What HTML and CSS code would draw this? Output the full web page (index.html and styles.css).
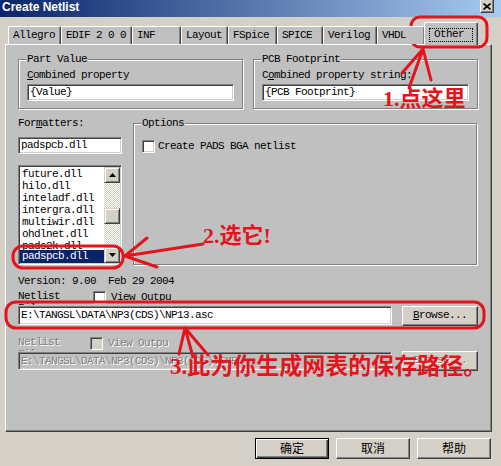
FILE: index.html
```html
<!DOCTYPE html>
<html lang="zh-CN">
<head>
  <meta charset="UTF-8" />
  <title>Create Netlist</title>
  <link rel="stylesheet" href="styles.css">
</head>
<body>
  <div class="window">
    <div class="titlebar">
      <span class="title">Create Netlist</span>
      <span class="close">
        <svg width="8" height="7" viewBox="0 0 8 7"><path d="M0.5 0.5 L7.5 6.5 M7.5 0.5 L0.5 6.5" stroke="#000" stroke-width="1.6"/></svg>
      </span>
    </div>

    <div class="tabs">
      <div class="tab">Allegro</div>
      <div class="tab">EDIF 2 0 0</div>
      <div class="tab">INF</div>
      <div class="tab">Layout</div>
      <div class="tab">FSpice</div>
      <div class="tab">SPICE</div>
      <div class="tab">Verilog</div>
      <div class="tab">VHDL</div>
      <div class="tab active"><span class="focus">Other</span></div>
    </div>

    <div class="panel">
      <div class="top-row">
        <fieldset class="group">
          <legend>Part Value</legend>
          <div class="label"><u>C</u>ombined property</div>
          <div class="field">{Value}</div>
        </fieldset>
        <fieldset class="group">
          <legend>PCB Footprint</legend>
          <div class="label">C<u>o</u>mbined property string:</div>
          <div class="field">{PCB Footprint}</div>
        </fieldset>
      </div>

      <div class="mid-row">
        <div class="formatters">
          <div class="label">For<u>m</u>atters:</div>
          <div class="field small">padspcb.dll</div>
          <div class="listbox">
            <ul class="items">
              <li>future.dll</li>
              <li>hilo.dll</li>
              <li>inteladf.dll</li>
              <li>intergra.dll</li>
              <li>multiwir.dll</li>
              <li>ohdlnet.dll</li>
              <li class="cut">pads2k.dll</li>
              <li class="selected">padspcb.dll</li>
              <li>padsrt.dll</li>
            </ul>
            <div class="scrollbar">
              <div class="sb-btn">
                <svg width="7" height="4" viewBox="0 0 7 4"><path d="M3.5 0 L7 4 L0 4 Z" fill="#000"/></svg>
              </div>
              <div class="sb-track"><div class="sb-thumb"></div></div>
              <div class="sb-btn">
                <svg width="7" height="4" viewBox="0 0 7 4"><path d="M0 0 L7 0 L3.5 4 Z" fill="#000"/></svg>
              </div>
            </div>
          </div>
        </div>
        <fieldset class="group options">
          <legend>Options</legend>
          <div class="check"><span class="box"></span>Create PADS BGA netlist</div>
        </fieldset>
      </div>

      <div class="version">Version: 9.00  Feb 29 2004</div>

      <div class="file-head">
        <div class="label stack">Netlist<br>File:</div>
        <div class="check"><span class="box"></span>View Outpu</div>
      </div>
      <div class="file-row">
        <div class="field path">E:\TANGSL\DATA\NP3(CDS)\NP13.asc</div>
        <div class="button"><u>B</u>rowse...</div>
      </div>

      <div class="file-head disabled">
        <div class="label stack">Netlist<br>File:</div>
        <div class="check"><span class="box"></span>View Outpu</div>
      </div>
      <div class="file-row disabled">
        <div class="field path">E:\TANGSL\DATA\NP3(CDS)\NP3(CDS).GMP</div>
        <div class="button">Browse...</div>
      </div>
    </div>

    <div class="footer">
      <div class="button cjk default">确定</div>
      <div class="button cjk">取消</div>
      <div class="button cjk">帮助</div>
    </div>

    <!-- red notes drawn over the dialog -->
    <div class="marks">
      <svg width="501" height="466" viewBox="0 0 501 466">
        <g fill="none" stroke="#e3141c" stroke-width="3" stroke-linecap="round">
          <rect x="411" y="17" width="76" height="30" rx="9"/>
          <path d="M423 49 L402 73 M423 49 L409 88 M423 49 L431 80"/>
          <rect x="13" y="246" width="110" height="22" rx="10"/>
          <path d="M125 256 L203 244 M125 256 L147 238 M125 256 L157 267"/>
          <rect x="6" y="302" width="478" height="26" rx="10"/>
          <path d="M185 328 L179 354 M185 328 L208 355 M185 328 L193 357"/>
        </g>
      </svg>
      <div class="note note1">1.点这里</div>
      <div class="note note2">2.选它!</div>
      <div class="note note3">3.此为你生成网表的保存路径。</div>
    </div>
  </div>
</body>
</html>
```

FILE: styles.css
```css
body {
  margin: 0;
  background: #d4d0c8;
  overflow: hidden;
}

.window {
  position: relative;
  width: 501px;
  height: 466px;
  background: #d4d0c8;
  font-family: 'Liberation Mono', monospace;
  font-size: 11px;
  letter-spacing: -0.6px;
  color: #000;
}

.titlebar {
  height: 17px;
  display: flex;
  justify-content: space-between;
  align-items: flex-start;
  background: linear-gradient(90deg, #0a246a, #a6caf0);
}

.title {
  font-family: 'Liberation Sans', sans-serif;
  font-weight: bold;
  font-size: 12px;
  letter-spacing: 0;
  line-height: 15px;
  color: #fff;
  padding-left: 2px;
}

.close {
  width: 14px;
  height: 13px;
  margin-right: 7px;
  box-sizing: border-box;
  background: #d4d0c8;
  border-right: 1px solid #404040;
  border-bottom: 1px solid #404040;
  border-left: 1px solid #fff;
  box-shadow: inset -1px -1px 0 #808080;
  display: flex;
  align-items: center;
  justify-content: center;
}

/* tabs */
.tabs {
  position: relative;
  z-index: 1;
  height: 27px;
  display: flex;
  align-items: flex-end;
  padding-left: 8px;
}

.tab {
  height: 18px;
  box-sizing: border-box;
  background: #c0c0c0;
  border-top: 1px solid #fff;
  border-left: 1px solid #fff;
  border-right: 1px solid #404040;
  box-shadow: inset -1px 0 0 #808080;
  border-radius: 2px 2px 0 0;
  padding: 1px 0 0 4px;
  line-height: 15px;
  white-space: nowrap;
  overflow: hidden;
}

.tab:nth-child(1) { width: 53px; }
.tab:nth-child(2) { width: 71px; }
.tab:nth-child(3) { width: 49px; }
.tab:nth-child(4) { width: 47px; }
.tab:nth-child(5) { width: 49px; }
.tab:nth-child(6) { width: 46px; }
.tab:nth-child(7) { width: 54px; }
.tab:nth-child(8) { width: 48px; }

.tab.active {
  width: 54px;
  height: 23px;
  margin-bottom: -1px;
  margin-left: -1px;
  padding: 4px 0 0 5px;
}

.focus {
  display: inline-block;
  width: 38px;
  height: 12px;
  line-height: 11px;
  padding-left: 4px;
  outline: 1px dotted #000;
}

/* tab page */
.panel {
  margin-left: 5px;
  width: 486px;
  height: 387px;
  box-sizing: border-box;
  background: #c0c0c0;
  border: 1px solid;
  border-color: #fff #808080 #808080 #fff;
  box-shadow: 1px 1px 0 #404040;
  padding: 8px 12px 0 12px;
}

.top-row {
  display: flex;
  gap: 10px;
}

.group {
  margin: 0;
  min-width: 0;
  padding: 4px 8px 7px;
  border: 1px solid #808080;
  box-shadow: 1px 1px 0 #fff, inset 1px 1px 0 #fff;
}

.top-row .group {
  width: 225px;
  box-sizing: border-box;
}

.group legend {
  padding: 0 1px;
  margin-left: -1px;
  line-height: 12px;
  background: #c0c0c0;
}

.label {
  line-height: 12px;
  white-space: pre;
}

.top-row .label {
  margin-bottom: 3px;
}

.field {
  height: 17px;
  box-sizing: border-box;
  background: #fff;
  border: 1px solid;
  border-color: #808080 #fff #fff #808080;
  box-shadow: inset 1px 1px 0 #404040, inset -1px -1px 0 #d4d0c8;
  padding: 0 2px;
  line-height: 15px;
  white-space: nowrap;
  overflow: hidden;
}

.mid-row {
  display: flex;
  gap: 11px;
  margin-top: 8px;
}

.formatters {
  width: 104px;
}

.field.small {
  margin-top: 8px;
}

.listbox {
  margin-top: 11px;
  height: 100px;
  box-sizing: border-box;
  display: flex;
  background: #fff;
  border: 1px solid;
  border-color: #808080 #fff #fff #808080;
  box-shadow: inset 1px 1px 0 #404040, inset -1px -1px 0 #d4d0c8;
  padding: 1px;
}

.items {
  flex: 1;
  margin: 0;
  padding: 0;
  list-style: none;
  overflow: hidden;
}

.items li {
  height: 12px;
  line-height: 12px;
  padding-left: 2px;
  white-space: nowrap;
  overflow: hidden;
}

.items li:first-child {
  margin-top: 1px;
}

.items li.cut {
  height: 10px;
}

.items li.selected {
  height: 13px;
  line-height: 13px;
  background: #0a246a;
  color: #fff;
}

.scrollbar {
  width: 16px;
  display: flex;
  flex-direction: column;
}

.sb-btn {
  height: 16px;
  box-sizing: border-box;
  background: #d4d0c8;
  border: 1px solid;
  border-color: #d4d0c8 #404040 #404040 #d4d0c8;
  box-shadow: inset 1px 1px 0 #fff, inset -1px -1px 0 #808080;
  display: flex;
  align-items: center;
  justify-content: center;
}

.sb-track {
  flex: 1;
  background: repeating-conic-gradient(#fff 0 25%, #d4d0c8 0 50%) 0 0 / 2px 2px;
  padding-top: 25px;
}

.sb-thumb {
  height: 16px;
  box-sizing: border-box;
  background: #d4d0c8;
  border: 1px solid;
  border-color: #d4d0c8 #404040 #404040 #d4d0c8;
  box-shadow: inset 1px 1px 0 #fff, inset -1px -1px 0 #808080;
}

.options {
  flex: 1;
  margin-right: 1px;
  padding-top: 11px;
}

.check {
  display: flex;
  align-items: center;
  gap: 3px;
  line-height: 13px;
  white-space: nowrap;
}

.box {
  width: 13px;
  height: 13px;
  box-sizing: border-box;
  background: #fff;
  border: 1px solid;
  border-color: #808080 #fff #fff #808080;
  box-shadow: inset 1px 1px 0 #404040, inset -1px -1px 0 #d4d0c8;
}

.version {
  margin-top: 10px;
  line-height: 12px;
  white-space: pre;
}

.file-head {
  display: flex;
  height: 15px;
  margin-top: 3px;
  overflow: hidden;
}

.file-head .stack {
  width: 75px;
  height: 15px;
  overflow: hidden;
}

.file-head .check {
  gap: 5px;
  align-items: flex-start;
  padding-top: 1px;
}

.file-row {
  display: flex;
  gap: 10px;
  margin-top: 1px;
  align-items: flex-start;
}

.field.path {
  width: 374px;
  height: 19px;
  line-height: 17px;
  padding-left: 2px;
}

.button {
  height: 20px;
  box-sizing: border-box;
  background: #d4d0c8;
  border: 1px solid;
  border-color: #fff #404040 #404040 #fff;
  box-shadow: inset -1px -1px 0 #808080;
  text-align: center;
  line-height: 17px;
  white-space: nowrap;
}

.file-row .button {
  width: 76px;
}

.disabled {
  color: #808080;
  text-shadow: 1px 1px 0 #fff;
}

.file-head.disabled {
  margin-top: 10px;
}

.file-head.disabled .stack {
  width: 72px;
}

.file-head.disabled .box {
  background: #d4d0c8;
}

.file-row.disabled {
  margin-top: 0;
}

.file-row.disabled .field {
  background: #c0c0c0;
  height: 18px;
  margin-top: 1px;
  line-height: 16px;
}

.footer {
  display: flex;
  justify-content: flex-end;
  gap: 7px;
  padding: 7px 10px 0 0;
}

.footer .button {
  width: 74px;
  height: 21px;
  line-height: 18px;
}

.cjk {
  font-family: 'Noto Sans CJK SC', sans-serif;
  font-size: 12px;
  letter-spacing: 0;
}

.footer .button.default {
  border: 1px solid #000;
  box-shadow: inset 1px 1px 0 #fff, inset -1px -1px 0 #404040, inset -2px -2px 0 #808080;
}

/* annotations */
.marks {
  position: absolute;
  left: 0;
  top: 0;
  width: 501px;
  height: 466px;
  pointer-events: none;
}

.marks svg {
  display: block;
}

.note {
  position: absolute;
  font-family: 'Liberation Serif', 'Noto Sans CJK SC', serif;
  font-size: 22px;
  font-weight: 600;
  line-height: 22px;
  letter-spacing: 0;
  color: #e3141c;
  white-space: nowrap;
}

.note1 { left: 383px; top: 88px; }
.note2 { left: 203px; top: 225px; }
.note3 { left: 170px; top: 356px; font-size: 23px; }
```
